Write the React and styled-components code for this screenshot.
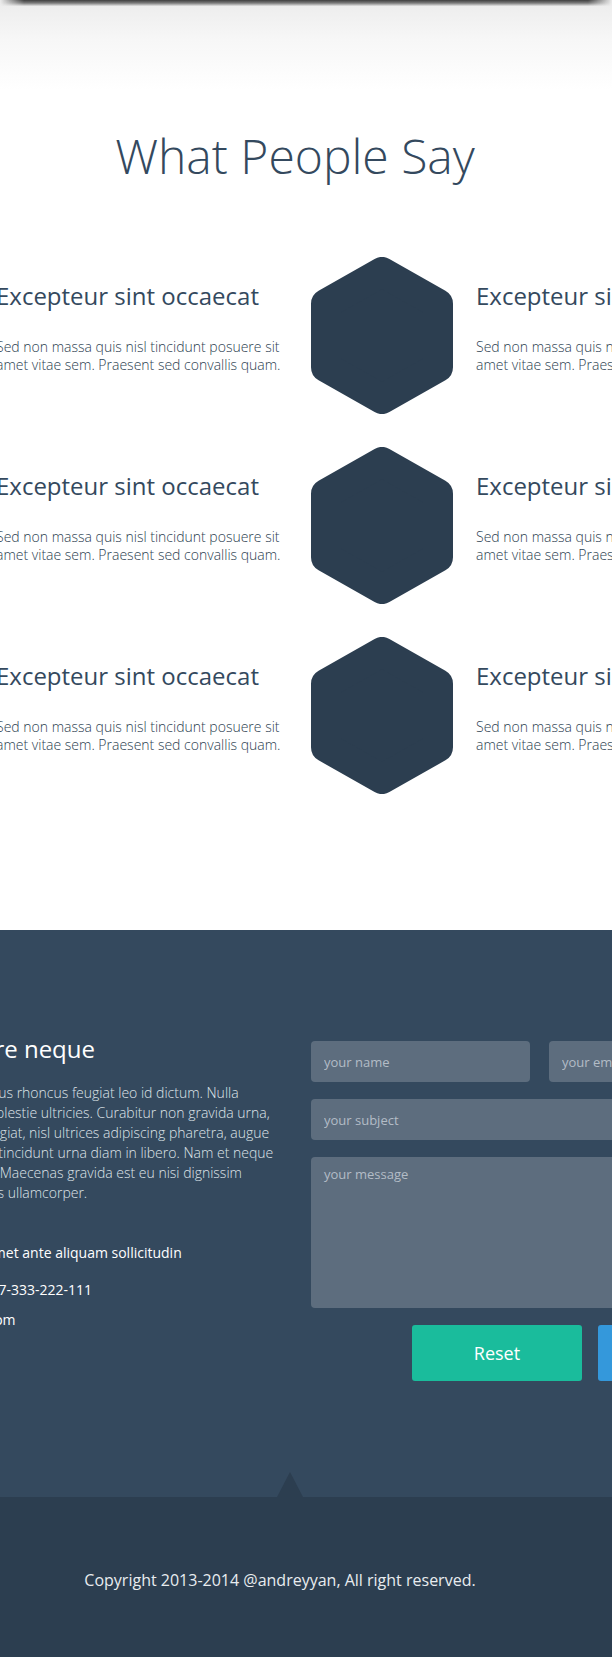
import React from "react";
import styled, { createGlobalStyle } from "styled-components";

const GlobalStyle = createGlobalStyle`
  body {
    margin: 0;
    font-family: "Open Sans", "Liberation Sans", sans-serif;
    background: #fff;
    overflow-x: hidden;
  }
  * { box-sizing: border-box; }
`;

const testimonials = [1, 2, 3, 4, 5, 6].map((id) => ({
  id,
  title: "Excepteur sint occaecat",
  text: "Sed non massa quis nisl tincidunt posuere sit amet vitae sem. Praesent sed convallis quam.",
}));

const aboutLines = [
  "Nam ipsum dolor sit Phasellus rhoncus feugiat leo id dictum. Nulla",
  "facilisi. Etiam est vehicula molestie ultricies. Curabitur non gravida urna,",
  "vitae, sed tempor dui, ac feugiat, nisl ultrices adipiscing pharetra, augue",
  "lacus blandit risus, sed quis tincidunt urna diam in libero. Nam et neque",
  "quam. Nunc in ipsum a nisl. Maecenas gravida est eu nisi dignissim",
  "vitae porta velit quis rhoncus ullamcorper.",
];

function Hexagon() {
  return (
    <HexSvg viewBox="0 0 142 157" aria-hidden="true">
      <polygon
        points="71,15 127,46.75 127,110.25 71,142 15,110.25 15,46.75"
        fill="#2c3e50"
        stroke="#2c3e50"
        strokeWidth="30"
        strokeLinejoin="round"
      />
    </HexSvg>
  );
}

export default function App() {
  return (
    <Page>
      <GlobalStyle />
      <Testimonials>
        <TopShade />
        <HeadingWrap>
          <SectionTitle>What People Say</SectionTitle>
        </HeadingWrap>
        <TestimonialGrid>
          {testimonials.map((item) => (
            <Testimonial key={item.id}>
              <Hexagon />
              <TestimonialBody>
                <TestimonialTitle>{item.title}</TestimonialTitle>
                <TestimonialText>{item.text}</TestimonialText>
              </TestimonialBody>
            </Testimonial>
          ))}
        </TestimonialGrid>
      </Testimonials>

      <Contact>
        <ContactGrid>
          <About>
            <AboutTitle>Vivamus dolor posuere neque</AboutTitle>
            <AboutText>
              {aboutLines.map((line) => (
                <Line key={line}>{line}</Line>
              ))}
            </AboutText>
            <Details>
              <Detail $space={40}>Ut lorem ipsum dolor sit amet ante aliquam sollicitudin</Detail>
              <Detail $space={17}>Telephone numbers: +1-777-333-222-111</Detail>
              <Detail $space={10}>E-mail: hello@andreyyan.com</Detail>
            </Details>
          </About>

          <Form onSubmit={(e) => e.preventDefault()}>
            <FieldRow>
              <Field type="text" placeholder="your name" />
              <Field type="email" placeholder="your email" />
            </FieldRow>
            <Field type="text" placeholder="your subject" />
            <Message placeholder="your message" />
            <Buttons>
              <Button type="reset" $color="#1abc9c">Reset</Button>
              <Button type="submit" $color="#3498db">Submit</Button>
            </Buttons>
          </Form>
        </ContactGrid>
      </Contact>

      <Footer>
        <FooterInner>
          <Copyright>Copyright 2013-2014 @andreyyan, All right reserved.</Copyright>
        </FooterInner>
      </Footer>
    </Page>
  );
}

const Page = styled.div`
  width: 612px;
  overflow: hidden;
`;

const Testimonials = styled.section`
  background: linear-gradient(#ececec 0, #f7f7f7 40px, #fff 90px);
  padding-bottom: 136px;
`;

const TopShade = styled.div`
  height: 6px;
  background: linear-gradient(#3f3f3f, #7a7a7a 50%, #e4e4e4);
  -webkit-mask-image: linear-gradient(to right, transparent, #000 24px, #000 calc(100% - 24px), transparent);
  mask-image: linear-gradient(to right, transparent, #000 24px, #000 calc(100% - 24px), transparent);
`;

const HeadingWrap = styled.div`
  width: 960px;
  margin: 126px 0 0 -185px;
  text-align: center;
`;

const SectionTitle = styled.h2`
  margin: 0;
  font-size: 48px;
  line-height: 1;
  font-weight: 300;
  color: #34495e;
`;

const TestimonialGrid = styled.div`
  display: grid;
  grid-template-columns: 451px 451px;
  column-gap: 29px;
  row-gap: 33px;
  width: 931px;
  margin: 77px 0 0 -169px;
`;

const Testimonial = styled.article`
  display: flex;
  align-items: flex-start;
  gap: 23px;
`;

const HexSvg = styled.svg`
  flex: none;
  width: 142px;
  height: 157px;
  display: block;
`;

const TestimonialBody = styled.div`
  flex: 1;
  padding-top: 25px;
`;

const TestimonialTitle = styled.h3`
  margin: 0;
  font-size: 24px;
  line-height: 1.2;
  font-weight: 400;
  color: #34495e;
  white-space: nowrap;
`;

const TestimonialText = styled.p`
  margin: 27px 0 0;
  font-size: 14px;
  line-height: 18px;
  font-weight: 300;
  color: #2c3e50;
`;

const Contact = styled.section`
  background: #34495e;
  padding: 105px 0 116px;
`;

const ContactGrid = styled.div`
  display: grid;
  grid-template-columns: 457px 457px;
  column-gap: 31px;
  align-items: start;
  width: 945px;
  margin-left: -177px;
`;

const About = styled.div`
  color: #fff;
`;

const AboutTitle = styled.h3`
  display: flex;
  justify-content: flex-end;
  width: 272px;
  margin: 0;
  font-size: 24px;
  line-height: 1.2;
  font-weight: 400;
  white-space: nowrap;
`;

const AboutText = styled.p`
  margin: 19px 0 0;
  font-size: 14px;
  line-height: 20px;
  font-weight: 300;
  color: #dfe4e9;
`;

const Line = styled.span`
  display: block;
  white-space: nowrap;
`;

const Details = styled.ul`
  list-style: none;
  margin: 0;
  padding: 0;
`;

const Detail = styled.li`
  margin-top: ${(p) => p.$space}px;
  font-size: 14px;
  line-height: 20px;
  color: #fff;
  white-space: nowrap;
`;

const Form = styled.form`
  display: flex;
  flex-direction: column;
  gap: 17px;
  margin-top: 6px;
`;

const FieldRow = styled.div`
  display: grid;
  grid-template-columns: 1fr 1fr;
  gap: 19px;
`;

const fieldStyles = `
  width: 100%;
  border: none;
  border-radius: 4px;
  background: #5d6d7e;
  color: #fff;
  font-family: "Open Sans", "Liberation Sans", sans-serif;
  font-size: 13px;
  padding: 0 13px;
  outline: none;
  &::placeholder { color: #b3bcc6; }
`;

const Field = styled.input`
  ${fieldStyles}
  height: 41px;
`;

const Message = styled.textarea`
  ${fieldStyles}
  height: 151px;
  padding-top: 8px;
  resize: none;
  display: block;
`;

const Buttons = styled.div`
  display: flex;
  justify-content: flex-end;
  gap: 16px;
`;

const Button = styled.button`
  width: 170px;
  height: 56px;
  border: none;
  border-radius: 3px;
  background: ${(p) => p.$color};
  color: #fff;
  font-family: "Open Sans", "Liberation Sans", sans-serif;
  font-size: 18px;
  cursor: pointer;
`;

const Footer = styled.footer`
  position: relative;
  height: 160px;
  background: #2c3e50;

  &::before {
    content: "";
    position: absolute;
    left: 277px;
    top: -25px;
    border-left: 13.5px solid transparent;
    border-right: 13.5px solid transparent;
    border-bottom: 25px solid #2c3e50;
  }
`;

const FooterInner = styled.div`
  width: 960px;
  margin-left: -200px;
  padding-top: 73px;
  text-align: center;
`;

const Copyright = styled.p`
  margin: 0;
  font-size: 16px;
  line-height: 20px;
  color: #e8ecef;
`;
